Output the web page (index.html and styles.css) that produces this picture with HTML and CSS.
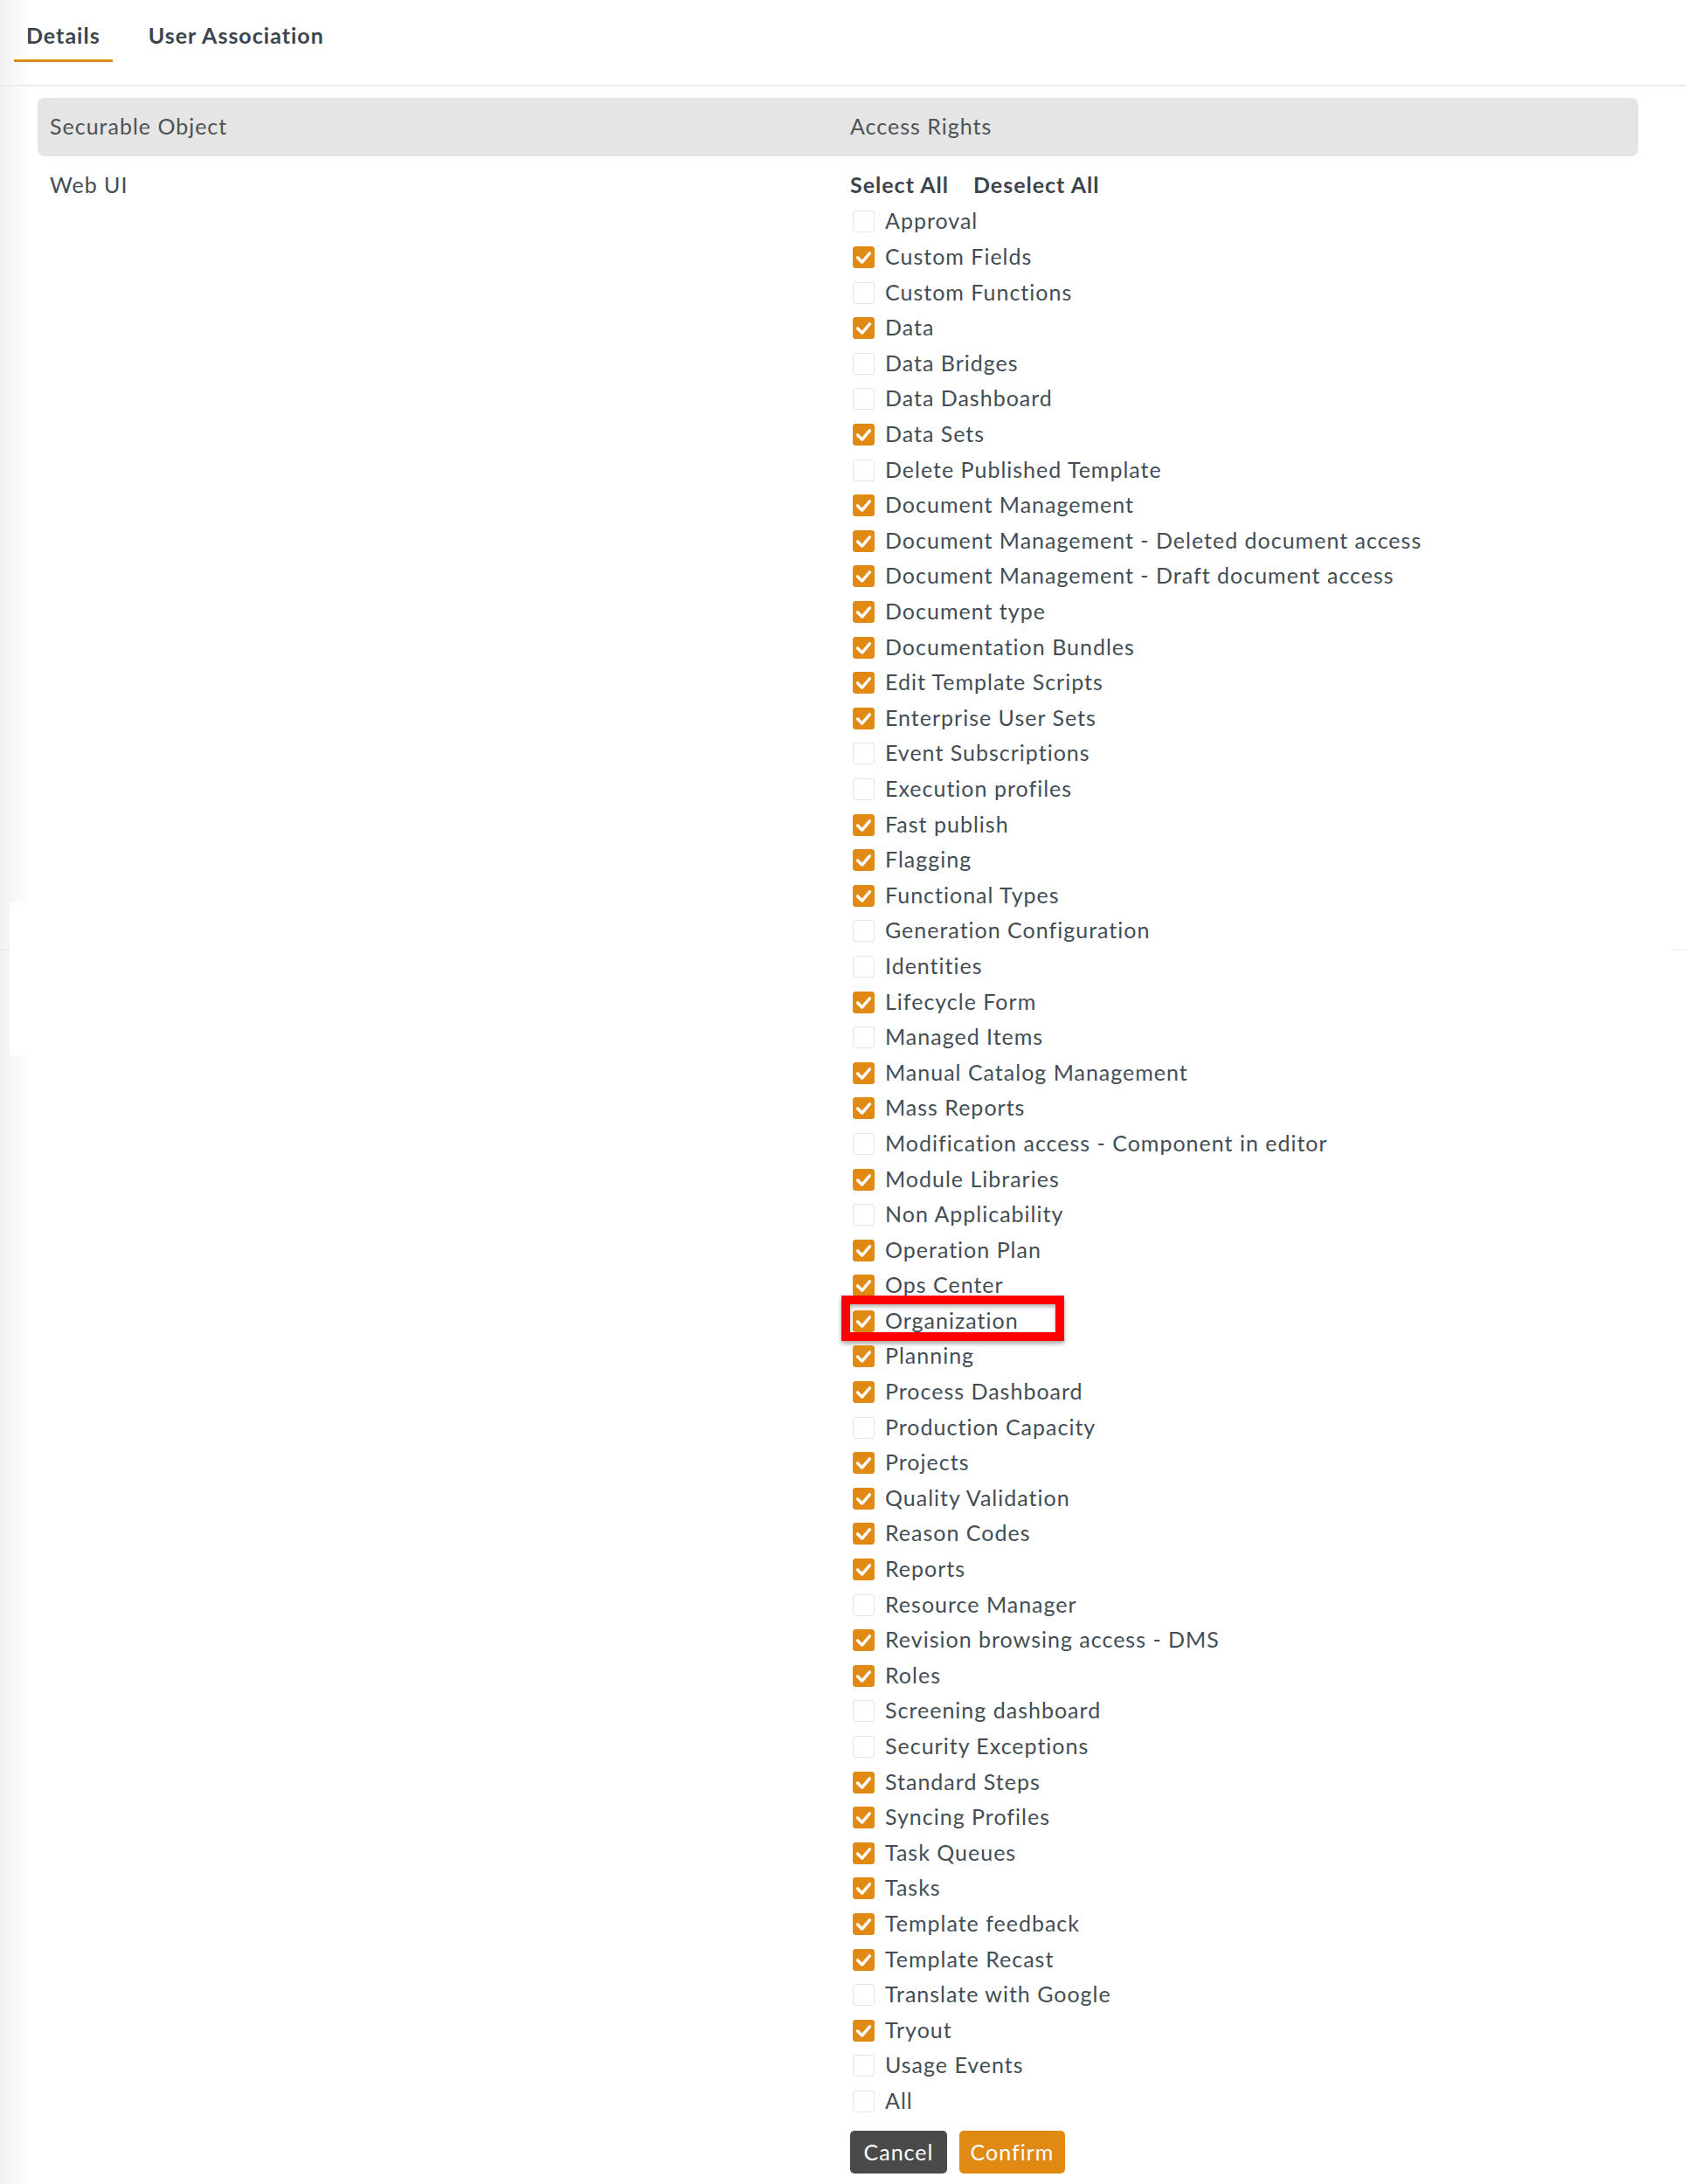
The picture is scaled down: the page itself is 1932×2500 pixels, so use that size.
FILE: index.html
```html
<!DOCTYPE html>
<html lang="en">
<head>
<meta charset="utf-8">
<title>Securable Object - Access Rights</title>
<link rel="stylesheet" href="styles.css">
</head>
<body>
<div class="page">
  <div class="seam seam-left"></div>
  <div class="seam seam-line-left"></div>
  <div class="seam seam-line-right"></div>

  <nav class="tabs">
    <div class="tab active">Details</div>
    <div class="tab">User Association</div>
  </nav>

  <main class="content">
    <div class="table-head">
      <div class="col">Securable Object</div>
      <div class="col">Access Rights</div>
    </div>
    <div class="table-row">
      <div class="col">Web UI</div>
      <div class="col rights">
        <div class="select-links"><span>Select All</span><span>Deselect All</span></div>
        <ul class="rights-list">
          <li class="item"><span class="box"></span>Approval</li>
          <li class="item"><span class="box on"></span>Custom Fields</li>
          <li class="item"><span class="box"></span>Custom Functions</li>
          <li class="item"><span class="box on"></span>Data</li>
          <li class="item"><span class="box"></span>Data Bridges</li>
          <li class="item"><span class="box"></span>Data Dashboard</li>
          <li class="item"><span class="box on"></span>Data Sets</li>
          <li class="item"><span class="box"></span>Delete Published Template</li>
          <li class="item"><span class="box on"></span>Document Management</li>
          <li class="item"><span class="box on"></span>Document Management - Deleted document access</li>
          <li class="item"><span class="box on"></span>Document Management - Draft document access</li>
          <li class="item"><span class="box on"></span>Document type</li>
          <li class="item"><span class="box on"></span>Documentation Bundles</li>
          <li class="item"><span class="box on"></span>Edit Template Scripts</li>
          <li class="item"><span class="box on"></span>Enterprise User Sets</li>
          <li class="item"><span class="box"></span>Event Subscriptions</li>
          <li class="item"><span class="box"></span>Execution profiles</li>
          <li class="item"><span class="box on"></span>Fast publish</li>
          <li class="item"><span class="box on"></span>Flagging</li>
          <li class="item"><span class="box on"></span>Functional Types</li>
          <li class="item"><span class="box"></span>Generation Configuration</li>
          <li class="item"><span class="box"></span>Identities</li>
          <li class="item"><span class="box on"></span>Lifecycle Form</li>
          <li class="item"><span class="box"></span>Managed Items</li>
          <li class="item"><span class="box on"></span>Manual Catalog Management</li>
          <li class="item"><span class="box on"></span>Mass Reports</li>
          <li class="item"><span class="box"></span>Modification access - Component in editor</li>
          <li class="item"><span class="box on"></span>Module Libraries</li>
          <li class="item"><span class="box"></span>Non Applicability</li>
          <li class="item"><span class="box on"></span>Operation Plan</li>
          <li class="item"><span class="box on"></span>Ops Center</li>
          <li class="item highlighted"><span class="box on"></span>Organization<span class="highlight"></span></li>
          <li class="item"><span class="box on"></span>Planning</li>
          <li class="item"><span class="box on"></span>Process Dashboard</li>
          <li class="item"><span class="box"></span>Production Capacity</li>
          <li class="item"><span class="box on"></span>Projects</li>
          <li class="item"><span class="box on"></span>Quality Validation</li>
          <li class="item"><span class="box on"></span>Reason Codes</li>
          <li class="item"><span class="box on"></span>Reports</li>
          <li class="item"><span class="box"></span>Resource Manager</li>
          <li class="item"><span class="box on"></span>Revision browsing access - DMS</li>
          <li class="item"><span class="box on"></span>Roles</li>
          <li class="item"><span class="box"></span>Screening dashboard</li>
          <li class="item"><span class="box"></span>Security Exceptions</li>
          <li class="item"><span class="box on"></span>Standard Steps</li>
          <li class="item"><span class="box on"></span>Syncing Profiles</li>
          <li class="item"><span class="box on"></span>Task Queues</li>
          <li class="item"><span class="box on"></span>Tasks</li>
          <li class="item"><span class="box on"></span>Template feedback</li>
          <li class="item"><span class="box on"></span>Template Recast</li>
          <li class="item"><span class="box"></span>Translate with Google</li>
          <li class="item"><span class="box on"></span>Tryout</li>
          <li class="item"><span class="box"></span>Usage Events</li>
          <li class="item"><span class="box"></span>All</li>
        </ul>
        <div class="actions">
          <button class="btn btn-cancel">Cancel</button>
          <button class="btn btn-confirm">Confirm</button>
        </div>
      </div>
    </div>
  </main>
</div>
</body>
</html>
```

FILE: styles.css
```css
* { box-sizing: border-box; }

html, body {
  margin: 0;
  padding: 0;
}

body {
  font-family: Lato, "Open Sans", "Liberation Sans", sans-serif;
  font-size: 25px;
  letter-spacing: 1px;
  color: #434d55;
  background: #fff;
}

.page {
  position: relative;
  min-height: 2500px;
  background: linear-gradient(to right, #f1f1f1 0, #f7f7f7 14px, #ffffff 36px);
}

/* screenshot seam artifacts */
.seam { position: absolute; }
.seam-left {
  left: 11px;
  top: 1033px;
  width: 30px;
  height: 175px;
  background: #fff;
}
.seam-line-left {
  left: 0;
  top: 1087px;
  width: 11px;
  height: 1px;
  background: #e6e6e6;
}
.seam-line-right {
  left: 1913px;
  top: 1087px;
  width: 17px;
  height: 1px;
  background: #ececec;
}

/* tabs */
.tabs {
  display: flex;
  align-items: flex-start;
  gap: 27px;
  height: 99px;
  padding-left: 16px;
  border-bottom: 2px solid #ececec;
  margin-right: 2px;
}

.tab {
  font-weight: 700;
  font-size: 25px;
  line-height: 30px;
  color: #3b444c;
  padding: 25px 14px 13px;
  border-bottom: 3px solid transparent;
}

.tab.active {
  border-bottom-color: #e08a14;
}

/* content */
.content {
  padding: 13px 57px 0 43px;
}

.table-head {
  display: flex;
  height: 67px;
  background: #e5e5e5;
  border-radius: 8px;
  color: #4d5257;
}

.table-head .col {
  flex: 1 1 0;
  padding: 17px 14px 0;
  line-height: 30px;
}

.table-row {
  display: flex;
}

.table-row .col {
  flex: 1 1 0;
  padding: 17px 14px 0;
  line-height: 30px;
}

.select-links {
  display: flex;
  gap: 28px;
  font-weight: 700;
  color: #3b444c;
  height: 30px;
  margin-bottom: 7.7px;
}

.rights-list {
  list-style: none;
  margin: 0;
  padding: 0;
}

.item {
  position: relative;
  display: flex;
  align-items: center;
  height: 40.6px;
  padding-bottom: 3px;
  white-space: nowrap;
}

.box {
  flex: none;
  width: 25px;
  height: 25px;
  margin-top: 3px;
  margin-left: 3px;
  margin-right: 12px;
  border: 1px solid #e4e4e4;
  border-radius: 3px;
  background: #fff;
}

.box.on {
  border-color: #e08a14;
  background-color: #e08a14;
  background-image: url("data:image/svg+xml,%3Csvg xmlns='http://www.w3.org/2000/svg' viewBox='0 0 25 25'%3E%3Cpolyline points='5,13 10.5,18.5 20,7.5' fill='none' stroke='white' stroke-width='3.8' stroke-linecap='round' stroke-linejoin='round'/%3E%3C/svg%3E");
  background-size: 100% 100%;
}

.highlight {
  position: absolute;
  left: -10px;
  top: -9px;
  width: 255px;
  height: 52px;
  border: 10px solid #ff0000;
  box-shadow: 0 3px 5px rgba(0, 0, 0, 0.35), inset 0 3px 4px rgba(0, 0, 0, 0.28);
  pointer-events: none;
}

.actions {
  display: flex;
  gap: 14px;
  margin-top: 13px;
}

.btn {
  font-family: inherit;
  font-size: 25px;
  letter-spacing: inherit;
  height: 49px;
  border: none;
  border-radius: 5px;
  color: #fff;
  padding: 0;
  line-height: 49px;
  text-align: center;
}

.btn-cancel {
  background: #4a4a4a;
  width: 111px;
}

.btn-confirm {
  background: #e08a14;
  width: 121px;
}
```
